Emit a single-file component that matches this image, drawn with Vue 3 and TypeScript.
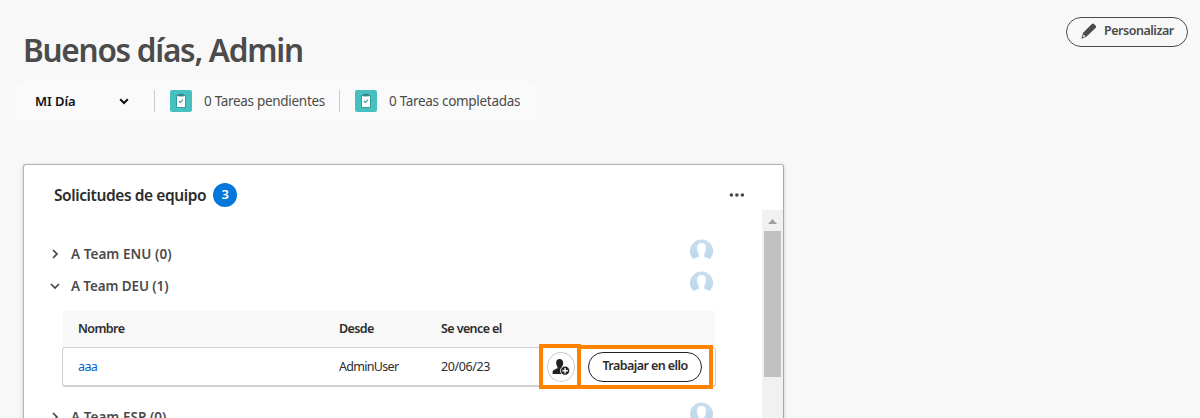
<script setup lang="ts">
interface Team {
  name: string
  open: boolean
}

const stats: { label: string; cls: string }[] = [
  { label: '0 Tareas pendientes', cls: 'pending' },
  { label: '0 Tareas completadas', cls: 'done' },
]
const teams: Team[] = [
  { name: 'A Team ENU (0)', open: false },
  { name: 'A Team DEU (1)', open: true },
  { name: 'A Team ESP (0)', open: false },
]
</script>

<template>
  <div class="page">
    <header class="top">
      <h1><span>Buenos días, Admin</span></h1>
      <button class="customize">
        <svg width="16" height="16" viewBox="0 0 16 16">
          <path d="M10.9 1Q12 .1 13 1L14.8 2.8Q15.7 3.8 14.8 4.8L5.6 13.4L1.2 15.4Q.2 15.7.5 14.6L2.4 9.6Z" fill="#4b4b4b" />
          <path d="M2.7 11.6L4.4 13.2L2.1 14.3L1.6 13.9Z" fill="#f8f8f8" />
        </svg>
        <span>Personalizar</span>
      </button>
    </header>

    <nav class="day">
      <div class="picker">
        <span>MI Día</span>
        <svg width="10" height="7" viewBox="0 0 10 7"><path d="M1.2 1.2L5 5L8.8 1.2" fill="none" stroke="#111" stroke-width="2" /></svg>
      </div>
      <div v-for="s in stats" :key="s.cls" class="stat" :class="s.cls">
        <svg width="22" height="22" viewBox="0 0 22 22">
          <rect width="22" height="22" rx="2" fill="#47c0c0" />
          <rect x="6" y="5" width="10" height="13" rx="1" fill="#359a9c" />
          <path d="M8 6V4.5H9.5Q11 2.6 12.5 4.5H14V6Z" fill="#34797d" />
          <rect x="7" y="6" width="8" height="11" fill="#fff" />
          <path d="M8 6.4V4.6H14V6.4Z" fill="#34888b" />
          <path d="M9 11L10.5 12.5L13 9.5" fill="none" stroke="#359496" stroke-width="1.1" />
        </svg>
        <span>{{ s.label }}</span>
      </div>
    </nav>

    <section class="card">
      <div class="card-head">
        <h2>Solicitudes de equipo</h2>
        <span class="count">3</span>
        <svg class="more" width="16" height="4" viewBox="0 0 16 4"><g fill="#444"><circle cx="2.4" cy="2" r="1.8" /><circle cx="7.9" cy="2" r="1.8" /><circle cx="13.4" cy="2" r="1.8" /></g></svg>
      </div>
      <div class="card-body">
        <div class="list">
          <template v-for="t in teams" :key="t.name">
            <div class="team">
              <svg class="chev" width="10" height="10" viewBox="0 0 10 10">
                <path :d="t.open ? 'M1 3L5 7L9 3' : 'M3 1L7 5L3 9'" fill="none" stroke="#444" stroke-width="1.7" />
              </svg>
              <span :class="{ expanded: t.open }">{{ t.name }}</span>
              <svg class="avatar" width="24" height="24" viewBox="0 0 24 24">
                <defs><linearGradient id="av" x1="0" y1="0" x2="0" y2="1"><stop offset="0" stop-color="#c9dfea" /><stop offset="1" stop-color="#bcd8ee" /></linearGradient></defs>
                <path d="M3.4 20A11.6 11.3 0 1 1 19.6 20L14.2 17.4V15.4Q16 12.8 16 9Q16 4 11.5 4Q7 4 7 9Q7 12.8 8.8 15.4V17.4Z" fill="url(#av)" />
              </svg>
            </div>
            <div v-if="t.open" class="table">
              <div class="row head"><span>Nombre</span><span class="from">Desde</span><span class="due">Se vence el</span></div>
              <div class="row item">
                <a>aaa</a><span class="user">AdminUser</span><span>20/06/23</span>
                <div class="mark assign">
                  <button class="round">
                    <svg width="18" height="18" viewBox="0 0 18 18">
                      <path d="M7.6 1C10 1 11.2 2.7 11.2 5C11.2 7 10.3 8.2 9.8 9V10L13.5 11.5V16H.6V13.8Q.7 12.3 2.2 11.7L5.5 10.2V9Q4.1 7.2 4.1 5Q4.1 1 7.6 1Z" fill="#222" />
                      <circle cx="13.1" cy="12.7" r="4.6" fill="#222" stroke="#fff" stroke-width=".9" />
                      <path d="M13.1 10V15.4M10.4 12.7H15.8" stroke="#fff" stroke-width="1.4" />
                    </svg>
                  </button>
                </div>
                <div class="mark work"><button class="pill"><span>Trabajar en ello</span></button></div>
              </div>
            </div>
          </template>
        </div>
        <div class="scroll">
          <svg width="21" height="21" viewBox="0 0 21 21"><path d="M6 14L10.5 9L15 14Z" fill="#a0a0a0" /></svg>
          <div class="thumb"></div>
        </div>
      </div>
    </section>
  </div>
</template>

<style>
body { margin: 0; background: #f8f8f8; overflow: hidden; }
</style>
<style scoped>
* { box-sizing: border-box; }
.page { width: 1200px; height: 418px; overflow: hidden; background: #f8f8f8; font-family: "Noto Sans", "Open Sans", sans-serif; font-size: 13px; color: #4b4b4b; display: flex; flex-direction: column; white-space: nowrap; }
button { font: inherit; color: inherit; padding: 0; background: none; }
h1, h2 { margin: 0; }
.top { height: 82px; display: flex; justify-content: space-between; padding: 0 12px 0 23px; flex: none; }
h1 { font-size: 31.5px; font-weight: 600; line-height: 44px; padding-top: 28px; letter-spacing: -1.25px; }
.customize { margin-top: 17px; width: 122px; height: 30px; border: 1px solid #4b4b4b; border-radius: 15px; display: flex; align-items: center; padding-left: 14px; font-weight: 600; font-size: 12.5px; letter-spacing: -.47px; }
.customize svg { margin-right: 7px; flex: none; position: relative; top: -1px; }
.customize span { line-height: 18px; margin-top: -2px; }
.day { width: 520px; height: 38px; margin-left: 16px; background: #fafafa; border-radius: 4px; display: flex; align-items: center; flex: none; }
.picker { width: 138px; display: flex; align-items: center; justify-content: space-between; padding: 0 25px 0 19px; color: #111; font-weight: 600; letter-spacing: -.1px; }
.stat { height: 22px; border-left: 1px solid #ccc; display: flex; align-items: center; padding-left: 15px; width: 185px; font-size: 13.5px; letter-spacing: -.3px; }
.stat svg { margin-right: 12px; flex: none; }
.stat.done { width: 190px; }
.card { margin: 44px 0 0 23px; width: 761px; height: 300px; flex: none; background: #fff; border: 1px solid #b5b5b5; border-right-color: #a8a8a8; border-radius: 3px; box-shadow: 0 1px 4px rgba(0,0,0,.18); }
.card-head { height: 45px; display: flex; align-items: center; padding: 15px 38px 0 30px; }
h2 { font-size: 15.5px; font-weight: 600; color: #2c2c2c; letter-spacing: -.41px; line-height: 22px; }
.count { width: 24px; height: 24px; border-radius: 50%; background: #0378da; color: #fff; font-weight: 600; text-align: center; line-height: 23px; margin-left: 7px; }
.more { margin-left: auto; }
.card-body { display: flex; }
.list { width: 738px; padding-top: 28px; }
.team { height: 32px; display: flex; align-items: center; padding: 0 48px 0 26px; font-weight: 600; font-size: 13.5px; letter-spacing: .05px; }
.expanded { letter-spacing: -.12px; }
.chev { margin-right: 11px; }
.avatar { margin-left: auto; position: relative; top: -3px; }
.table { margin: 9px 0 14px 38px; width: 654px; }
.row { display: grid; grid-template-columns: 261px 102px 98px 40px 1fr; align-items: center; padding-left: 16px; font-size: 12.5px; letter-spacing: -.4px; color: #2c2c2c; }
.head { height: 36px; margin-left: 1px; width: 652px; padding: 0 0 2px 15px; background: #f8f8f8; font-weight: 600; letter-spacing: -.6px; }
.item { height: 40px; grid-template-rows: 37px; border: 1px solid #d0d0d0; border-bottom-width: 2px; border-radius: 3px; padding-left: 15px; }
.item a { color: #0b5fc4; letter-spacing: -.6px; }
.user { letter-spacing: -.7px; }
.mark { height: 45px; border: 4px solid #ff8200; display: flex; align-items: center; justify-content: center; }
.assign { width: 42px; }
.work { width: 136px; height: 44px; margin-top: 1px; margin-left: -2px; }
.round { width: 28px; height: 30px; margin: 1px 0 0 1px; border: 1px solid #ccc; border-radius: 50%; display: flex; align-items: center; justify-content: center; }
.pill { width: 114px; height: 30px; border: 1px solid #222; border-radius: 15px; font-weight: 600; letter-spacing: -.57px; }
.pill span { position: relative; top: -2px; }
.scroll { width: 21px; height: 260px; background: #f1f1f1; }
.scroll svg { display: block; }
.thumb { margin-left: 2px; width: 17px; height: 146px; background: #c1c1c1; }
</style>
